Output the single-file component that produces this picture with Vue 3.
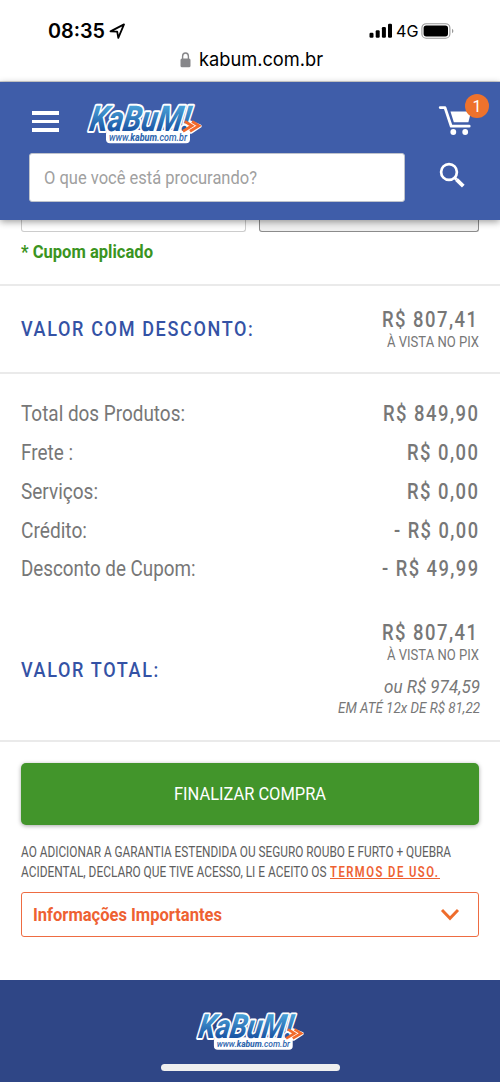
<script setup>
import { h } from 'vue'

// Single line of text set to an exact measure, with capitals centred in its box.
const FitText = (p) =>
  h('svg', { class: 'fit', width: p.w, height: p.lh, role: 'text' }, [
    h('text', {
      x: 0,
      y: p.lh / 2 + p.size * 0.356 - 0.3,
      'font-size': p.size,
      textLength: p.w,
      lengthAdjust: 'spacingAndGlyphs',
    }, p.t),
  ])
FitText.props = ['t', 'w', 'size', 'lh']

const KabumLogo = (p) =>
  h('svg', { viewBox: '0 0 114 41', width: p.w, height: p.w * 41 / 114 }, [
    h('defs', [
      h('linearGradient', { id: 'ink' + p.w, x1: 0, y1: 0, x2: 0, y2: 1 }, [
        h('stop', { offset: '0.2', 'stop-color': '#479fd6' }),
        h('stop', { offset: '0.75', 'stop-color': '#1d58a6' }),
      ]),
    ]),
    h('rect', { x: 18, y: 27, width: 84, height: 13.2, rx: 4, fill: '#fff' }),
    h('path', { d: 'M97 19h5l10 4-9 6h-8z', fill: '#fff', stroke: '#fff', 'stroke-width': 3.5, 'stroke-linejoin': 'round' }),
    h('text', {
      x: 1, y: 28, 'font-size': 35.5, textLength: 100, lengthAdjust: 'spacingAndGlyphs',
      transform: 'translate(4 0) skewX(-9)',
      'font-weight': 800, 'font-style': 'italic', fill: `url(#ink${p.w})`,
      stroke: '#fff', 'stroke-width': 4, 'stroke-linejoin': 'round', 'paint-order': 'stroke',
    }, 'KaBuM!'),
    h('path', { d: 'M97 18.5l7 4.3-9 5.4M104 18.5l7 4.3-9 5.4', fill: 'none', stroke: '#f26a2b', 'stroke-width': 2.8 }),
    h('text', { x: 21, y: 37.6, 'font-size': 10.4, textLength: 78, lengthAdjust: 'spacingAndGlyphs', 'font-style': 'italic', 'font-weight': 500, fill: '#2f66ae' }, [
      'www.', h('tspan', { 'font-weight': 800 }, 'kabum'), '.com.br',
    ]),
  ])
KabumLogo.props = ['w']

const rows = [
  { label: 'Total dos Produtos:', lw: 164, value: 'R$ 849,90', vw: 96.5 },
  { label: 'Frete :', lw: 52, value: 'R$ 0,00', vw: 72.5 },
  { label: 'Serviços:', lw: 77, value: 'R$ 0,00', vw: 72.5 },
  { label: 'Crédito:', lw: 66, value: '- R$ 0,00', vw: 85.5 },
  { label: 'Desconto de Cupom:', lw: 174.5, value: '- R$ 49,99', vw: 97.5 },
]
</script>

<template>
  <div class="page">
    <div class="status">
      <div class="status-row">
        <div class="clock">
          <FitText t="08:35" :w="57" :size="19.4" :lh="22" />
          <svg class="loc" width="17" height="17" viewBox="0 0 17 17"><path d="M1.5 8.4L15 1.4 9.3 14.8 8.2 8.6z" fill="none" stroke="#000" stroke-width="1.8" stroke-linejoin="round" /></svg>
        </div>
        <div class="signal">
          <svg width="24" height="16" viewBox="0 0 24 16"><rect x=".5" y="9.7" width="4" height="5" rx="1.2" /><rect x="6.7" y="7.2" width="4" height="7.5" rx="1.2" /><rect x="12.9" y="4" width="4" height="10.7" rx="1.2" /><rect x="19" y=".7" width="4" height="14" rx="1.2" /></svg>
          <FitText class="net" t="4G" :w="22.5" :size="16.5" :lh="20" />
          <svg width="33" height="17" viewBox="0 0 33 17"><rect x=".9" y=".7" width="28" height="14.5" rx="4.3" fill="none" stroke="#999" stroke-width="1.1" /><rect x="2.6" y="2.5" width="24.4" height="10.9" rx="2.6" /><path d="M31 5.7v4.6q1.4-.7 1.4-2.3T31 5.7z" fill="#999" /></svg>
        </div>
      </div>
      <div class="address">
        <svg width="11" height="16" viewBox="0 0 11 16"><path d="M2.6 7V4.3a2.9 3.3 0 0 1 5.8 0V7" fill="none" stroke="#87878a" stroke-width="1.4" /><rect x=".5" y="6.5" width="10" height="8.8" rx="1.5" fill="#87878a" /></svg>
        <FitText t="kabum.com.br" :w="124" :size="19" :lh="25" />
      </div>
    </div>

    <header class="header">
      <div class="top">
        <div class="burger"><i></i><i></i><i></i></div>
        <KabumLogo class="logo" :w="114" />
        <div class="cart">
          <svg width="32" height="30" viewBox="0 0 32 30"><path d="M1.2 1.6H6l6.2 18.6h18" fill="none" stroke="#fff" stroke-width="2.8" stroke-linejoin="round" stroke-linecap="round" /><path d="M11.5 5.5H32l-2.6 10.8H14.8z" fill="#fff" /><circle cx="14.3" cy="26" r="2.9" fill="#fff" /><circle cx="26.2" cy="26" r="2.9" fill="#fff" /></svg>
          <span class="badge">1</span>
        </div>
      </div>
      <div class="search">
        <div class="input"><FitText t="O que você está procurando?" :w="213" :size="19" :lh="28" /></div>
        <svg width="27" height="27" viewBox="0 0 27 27" fill="none" stroke="#fff"><circle cx="10" cy="10" r="7.9" stroke-width="2.7" /><path d="M15.8 15.8l1.8 1.8" stroke-width="3" /><path d="M17.6 17.6l6.7 6.5" stroke-width="3.8" /></svg>
      </div>
    </header>

    <section class="coupon">
      <div class="fields"><div class="field"></div><div class="field apply"></div></div>
      <FitText class="applied" t="* Cupom aplicado" :w="132" :size="18.2" :lh="24" />
    </section>

    <section class="discount">
      <FitText class="title" t="VALOR COM DESCONTO:" :w="233.5" :size="21" :lh="30" />
      <div class="amounts">
        <FitText class="price" t="R$ 807,41" :w="96.5" :size="21.3" :lh="23" />
        <FitText t="À VISTA NO PIX" :w="92" :size="15" :lh="22" />
      </div>
    </section>

    <section class="totals">
      <div v-for="r in rows" :key="r.label" class="row">
        <FitText class="label" :t="r.label" :w="r.lw" :size="21.5" :lh="30" />
        <FitText class="price" :t="r.value" :w="r.vw" :size="21.3" :lh="30" />
      </div>
      <div class="grand">
        <FitText class="title" t="VALOR TOTAL:" :w="139" :size="21" :lh="30" />
        <div class="amounts">
          <FitText class="price" t="R$ 807,41" :w="96.5" :size="21.3" :lh="23" />
          <FitText t="À VISTA NO PIX" :w="92" :size="15" :lh="22" />
          <FitText class="italic first" t="ou R$ 974,59" :w="96" :size="18" :lh="22" />
          <FitText class="italic" t="EM ATÉ 12x DE R$ 81,22" :w="142" :size="14.6" :lh="21" />
        </div>
      </div>
    </section>

    <section class="checkout">
      <button class="buy"><FitText t="FINALIZAR COMPRA" :w="152" :size="18.8" :lh="28" /></button>
      <div class="notice">
        <FitText t="AO ADICIONAR A GARANTIA ESTENDIDA OU SEGURO ROUBO E FURTO + QUEBRA" :w="430" :size="13.8" :lh="20" />
        <div class="line">
          <FitText t="ACIDENTAL, DECLARO QUE TIVE ACESSO, LI E ACEITO OS" :w="305.5" :size="13.8" :lh="20" />
          <a class="terms"><FitText t="TERMOS DE USO." :w="109.5" :size="13.8" :lh="20" /></a>
        </div>
      </div>
      <div class="info">
        <FitText t="Informações Importantes" :w="189" :size="18.2" :lh="28" />
        <svg width="20" height="14" viewBox="0 0 20 14"><path d="M2 2l8 8.3L18 2" fill="none" stroke="#ee6c2c" stroke-width="2.9" /></svg>
      </div>
    </section>

    <footer class="footer">
      <KabumLogo :w="107" />
      <div class="home"></div>
    </footer>
  </div>
</template>

<style>
body { margin: 0; background: #fff; }
</style>

<style scoped>
.page { width: 500px; height: 1082px; overflow: hidden; display: flex; flex-direction: column; background: #fff; color: #777; fill: currentColor; font-family: Roboto, "Liberation Sans", sans-serif; }
.page * { box-sizing: border-box; }
svg { display: block; flex: none; overflow: visible; }
.status { height: 82px; flex: none; padding-top: 20px; border-bottom: 1px solid #d4d4d4; color: #000; fill: #000; font-family: Inter, sans-serif; }
.status-row { height: 22px; padding: 0 46px 0 48px; display: flex; justify-content: space-between; align-items: center; }
.clock { display: flex; align-items: center; gap: 4px; font-weight: 560; }
.signal { display: flex; align-items: center; gap: 3px; }
.address { display: flex; align-items: center; gap: 8px; padding: 5px 0 0 180px; }
.header { height: 138px; flex: none; position: relative; background: #3f5da9; box-shadow: 0 2px 7px rgba(0, 0, 0, .38); }
.top { height: 71px; display: flex; align-items: flex-start; padding: 21px 11px 0 32px; }
.burger { width: 27px; display: grid; gap: 5px; padding-top: 8px; }
.burger i { height: 3.5px; background: #fff; }
.logo { margin-left: 29px; }
.cart { position: relative; margin-left: auto; padding: 3px 18px 0 0; }
.badge { position: absolute; right: 0; top: -9px; width: 24px; height: 24px; border-radius: 50%; background: #ee722c; color: #fff; font-size: 16px; line-height: 25px; text-align: center; }
.search { display: flex; align-items: center; padding-left: 29px; gap: 34px; }
.search > svg { margin-top: -5px; }
.input { width: 376px; height: 49px; display: flex; align-items: center; padding: 0 0 0 14px; border: 1px solid #bfc3cc; border-radius: 3px; background: #fff; fill: #a0a0a0; }
.coupon { height: 64px; flex: none; padding: 0 21px; }
.fields { height: 12px; display: grid; grid-template-columns: 225px 220px; justify-content: space-between; }
.field { border: 1.5px solid #ccc; border-top: 0; border-radius: 0 0 3px 3px; }
.apply { background: #efefef; border-color: #8b8b8b; }
.applied { margin: 7.5px 0 0 .4px; fill: #3a9421; font-weight: 700; }
.discount { height: 88px; flex: none; border-top: 2px solid #eaeaea; display: flex; justify-content: space-between; align-items: center; padding: 0 21px; }
.title { fill: #3452a5; font-weight: 500; letter-spacing: 1.9px; margin-left: .4px; }
.discount .amounts { margin-top: 2px; }
.amounts { display: flex; flex-direction: column; align-items: flex-end; padding-right: .5px; }
.price { font-weight: 500; letter-spacing: 1.7px; }
.totals { height: 368px; flex: none; border-top: 2px solid #eaeaea; padding: 21px 21px 0; }
.row { height: 38.75px; display: flex; justify-content: space-between; align-items: center; }
.label { margin-left: .4px; }
.grand { display: flex; justify-content: space-between; align-items: center; padding-top: 32.5px; }
.italic { font-style: italic; margin-right: -1px; }
.first { margin-top: 10px; }
.checkout { height: 240px; flex: none; border-top: 2px solid #eaeaea; padding: 21px 21px 0; }
.buy { display: flex; align-items: center; justify-content: center; width: 458px; height: 62px; margin: 0; padding: 0 0 1px; border: 0; border-radius: 5px; background: #42952b; fill: #fff; font-family: inherit; box-shadow: 0 1px 4px rgba(0, 0, 0, .35); }
.notice { margin: 16.5px 0 0 .3px; fill: #5e5e5e; }
.line { display: flex; gap: 3.5px; }
.terms { height: 17px; border-bottom: 1.3px solid #ee6132; fill: #ee6132; font-weight: 600; letter-spacing: 1.8px; }
.info { margin-top: 10.5px; height: 45px; display: flex; align-items: center; justify-content: space-between; padding: 0 18px 0 11px; border: 1.5px solid #ee6c42; border-radius: 3px; fill: #ee6132; font-weight: 700; }
.footer { flex: 1; background: #2f4686; display: flex; flex-direction: column; align-items: center; padding-top: 32px; }
.home { margin-top: 14px; width: 179px; height: 7px; border-radius: 4px; background: #efefef; }
</style>
